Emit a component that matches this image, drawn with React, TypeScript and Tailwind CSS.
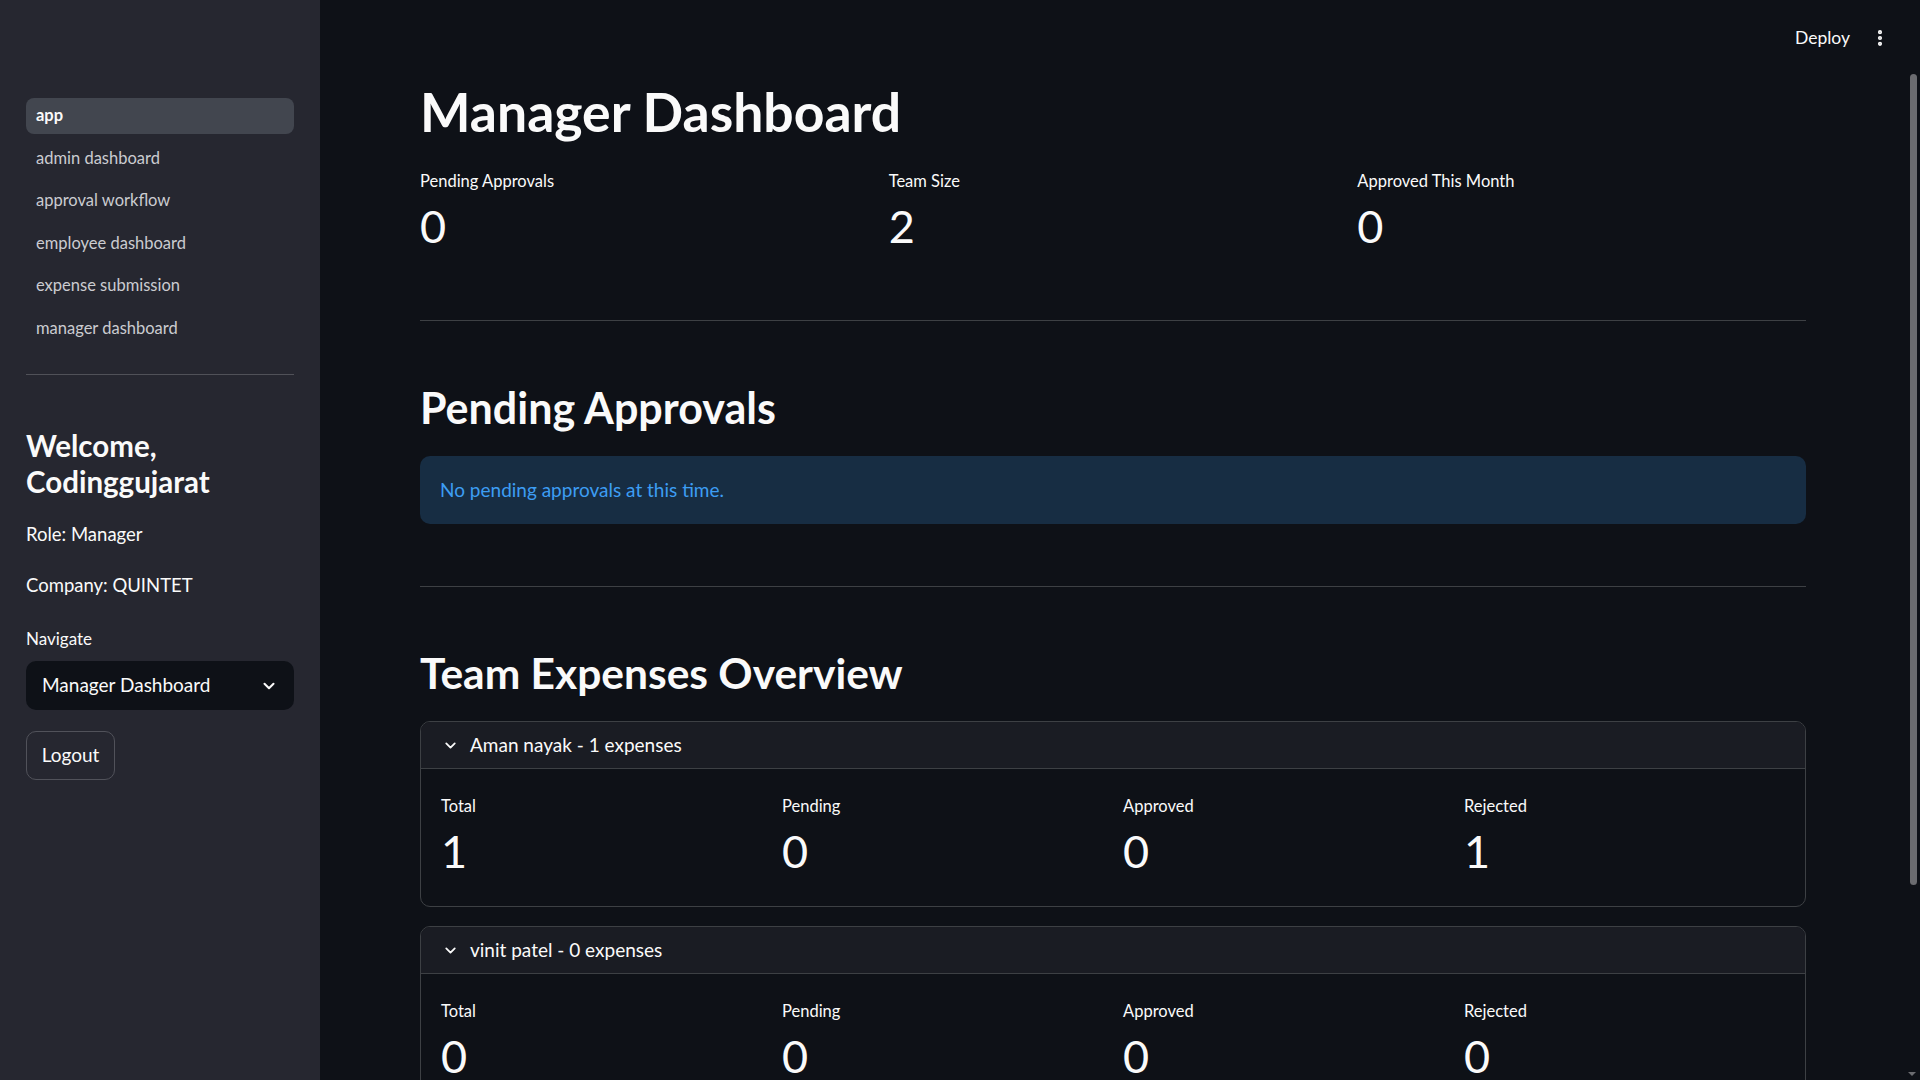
import { ChevronDown, EllipsisVertical } from "lucide-react";

const navItems = ["app", "admin dashboard", "approval workflow", "employee dashboard", "expense submission", "manager dashboard"];

const Metric = ({ label, value }: { label: string; value: string }) => (
  <div className="flex flex-col">
    <p className="text-[16.5px] leading-[24px] text-[#fafafa]">{label}</p>
    <p className="mt-[6px] text-[45px] leading-[54px] text-[#fafafa]">{value}</p>
  </div>
);

const Expander = ({ title, stats }: { title: string; stats: [string, string][] }) => (
  <div className="rounded-[10px] border border-[#3d4044] overflow-hidden">
    <div className="h-[47px] flex items-center gap-[11px] px-[20px] bg-[#1a1c23] border-b border-[#3d4044]">
      <ChevronDown size={17} strokeWidth={2.5} className="text-[#fafafa] ml-[1px]" />
      <span className="text-[19px] text-[#fafafa]">{title}</span>
    </div>
    <div className="grid grid-cols-4 gap-5 px-[20px] pt-[25px] pb-[28px]">
      {stats.map(([l, v]) => <Metric key={l} label={l} value={v} />)}
    </div>
  </div>
);

export default function App() {
  return (
    <div className="w-[1920px] h-[1080px] overflow-hidden flex bg-[#0e1117] text-[#fafafa] font-['Lato',sans-serif] relative">
      <aside className="w-[320px] shrink-0 bg-[#262730] px-[26px] pt-[98px]">
        <nav className="flex flex-col gap-[7px]">
          {navItems.map((n, i) => (
            <div key={n} className={`h-[35.5px] flex items-center px-[10px] rounded-[8px] text-[16.5px] ${i === 0 ? "bg-[#42464f] font-bold text-[#fafafa]" : "text-[#cbccd0]"}`}>
              {n}
            </div>
          ))}
        </nav>
        <div className="mt-[28px] h-px bg-[#505158]" />
        <h3 className="mt-[53px] text-[29.5px] leading-[36px] font-bold">Welcome,<br />Codinggujarat</h3>
        <p className="mt-[20px] text-[18.5px] leading-[28px]">Role: Manager</p>
        <p className="mt-[23px] text-[18.5px] leading-[28px]">Company: QUINTET</p>
        <p className="mt-[28px] text-[17px] leading-[24px]">Navigate</p>
        <div className="mt-[10px] h-[49px] rounded-[10px] bg-[#0e1117] flex items-center justify-between pl-[16px] pr-[16px]">
          <span className="text-[19px]">Manager Dashboard</span>
          <ChevronDown size={18} strokeWidth={2.75} />
        </div>
        <button className="mt-[21px] h-[49px] w-[89px] rounded-[10px] border border-[#51525a] text-[19px] text-[#fafafa]">Logout</button>
      </aside>

      <main className="flex-1 min-w-0">
        <header className="h-[76px] flex items-center justify-end gap-[20px] pr-[30px]">
          <span className="text-[17.5px]">Deploy</span>
          <EllipsisVertical size={20} strokeWidth={3} />
        </header>
        <div className="pl-[100px] pr-[114px] mt-[2px]">
          <h1 className="text-[53.5px] leading-[66px] font-bold">Manager Dashboard</h1>
          <div className="mt-[25px] grid grid-cols-3 gap-5">
            <Metric label="Pending Approvals" value="0" />
            <Metric label="Team Size" value="2" />
            <Metric label="Approved This Month" value="0" />
          </div>
          <div className="mt-[67px] h-px bg-[#3d4044]" />
          <h2 className="mt-[60px] text-[43px] leading-[54px] font-bold">Pending Approvals</h2>
          <div className="mt-[21px] h-[68px] rounded-[10px] bg-[#172d43] flex items-center px-[20px]">
            <span className="text-[19px] text-[#3d9df3]">No pending approvals at this time.</span>
          </div>
          <div className="mt-[62px] h-px bg-[#3d4044]" />
          <h2 className="mt-[59px] text-[42.5px] leading-[54px] font-bold">Team Expenses Overview</h2>
          <div className="mt-[21px] flex flex-col gap-[19px]">
            <Expander title="Aman nayak - 1 expenses" stats={[["Total", "1"], ["Pending", "0"], ["Approved", "0"], ["Rejected", "1"]]} />
            <Expander title="vinit patel - 0 expenses" stats={[["Total", "0"], ["Pending", "0"], ["Approved", "0"], ["Rejected", "0"]]} />
          </div>
        </div>
      </main>

      <div className="absolute right-[3px] top-[74px] w-[7px] h-[811px] rounded-full bg-[#6b6c70]" />
      <div className="absolute right-[4px] bottom-[4px] w-0 h-0 border-l-[4px] border-r-[4px] border-t-[4px] border-l-transparent border-r-transparent border-t-[#6b6c70]" />
    </div>
  );
}
